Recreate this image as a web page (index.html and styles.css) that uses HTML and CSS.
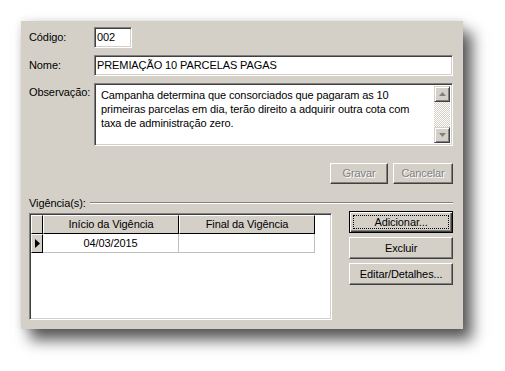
FILE: index.html
```html
<!DOCTYPE html>
<html lang="pt">
<head>
<meta charset="utf-8">
<link rel="stylesheet" href="styles.css">
</head>
<body>
<div class="panel">
  <div class="row">
    <div class="label">Código:</div>
    <div class="field code">002</div>
  </div>
  <div class="row gap7">
    <div class="label">Nome:</div>
    <div class="field name">PREMIAÇÃO 10 PARCELAS PAGAS</div>
  </div>
  <div class="row gap7 top">
    <div class="label obs-label">Observação:</div>
    <div class="field memo">
      <div class="memo-text">Campanha determina que consorciados que pagaram as 10 primeiras parcelas em dia, terão direito a adquirir outra cota com taxa de administração zero.</div>
      <div class="scroll">
        <div class="sbtn"><svg width="7" height="4" viewBox="0 0 7 4"><path d="M3.5 0 L7 4 L0 4 Z" fill="#808080"/></svg></div>
        <div class="track"></div>
        <div class="sbtn"><svg width="7" height="4" viewBox="0 0 7 4"><path d="M0 0 L7 0 L3.5 4 Z" fill="#808080"/></svg></div>
      </div>
    </div>
  </div>
  <div class="actions">
    <div class="btn disabled w58">Gravar</div>
    <div class="btn disabled w60">Cancelar</div>
  </div>
  <div class="group">
    <span class="group-label">Vigência(s):</span>
    <span class="etch"></span>
  </div>
  <div class="lower">
    <div class="grid">
      <div class="grow head">
        <div class="ind hcell"></div>
        <div class="col hcell">Início da Vigência</div>
        <div class="col hcell">Final da Vigência</div>
      </div>
      <div class="grow data">
        <div class="ind icell"><svg width="5" height="9" viewBox="0 0 5 9"><path d="M0 0 L5 4.5 L0 9 Z" fill="#000"/></svg></div>
        <div class="col dcell">04/03/2015</div>
        <div class="col dcell"></div>
      </div>
    </div>
    <div class="side">
      <div class="btn default"><span class="focus">Adicionar...</span></div>
      <div class="btn">Excluir</div>
      <div class="btn">Editar/Detalhes...</div>
    </div>
  </div>
</div>
</body>
</html>
```
FILE: styles.css
```css
* { box-sizing: border-box; }
html, body { margin: 0; padding: 0; background: #fff; }
body {
  width: 505px;
  height: 371px;
  overflow: hidden;
  font-family: "Liberation Sans", Arial, sans-serif;
  font-size: 11px;
  letter-spacing: -0.1px;
  color: #000;
}
.panel {
  margin: 21px 0 0 21px;
  width: 442px;
  height: 308px;
  background: #d4d0c8;
  padding: 6px 10px 0 8px;
  box-shadow: 9px 11px 14px rgba(0,0,0,0.65), 0 0 8px rgba(0,0,0,0.12);
}
.row { display: flex; align-items: center; }
.row.top { align-items: flex-start; }
.gap7 { margin-top: 7px; }
.label { width: 65px; line-height: 13px; }
.obs-label { padding-top: 3px; }
.field {
  background: #fff;
  height: 21px;
  border: 1px solid;
  border-color: #808080 #fff #fff #808080;
  box-shadow: inset 1px 1px #404040, inset -1px -1px #d4d0c8;
  padding: 0 0 0 2px;
  line-height: 19px;
  white-space: nowrap;
}
.code { width: 38px; }
.name { width: 359px; }
.memo {
  width: 359px;
  height: 63px;
  display: flex;
  padding: 2px 2px 2px 6px;
  line-height: 14px;
  white-space: normal;
}
.memo-text { flex: 1; padding-top: 2px; padding-right: 4px; }
.scroll { width: 16px; display: flex; flex-direction: column; }
.sbtn {
  height: 16px;
  background: #d4d0c8;
  border: 1px solid;
  border-color: #d4d0c8 #404040 #404040 #d4d0c8;
  box-shadow: inset 1px 1px #fff, inset -1px -1px #808080;
  display: flex;
  align-items: center;
  justify-content: center;
}
.track {
  flex: 1;
  background: repeating-conic-gradient(#d4d0c8 0 25%, #fff 0 50%) 0 0 / 2px 2px;
}
.actions {
  display: flex;
  justify-content: flex-end;
  gap: 5px;
  margin-top: 17px;
}
.btn {
  height: 22px;
  background: #d4d0c8;
  border: 1px solid;
  border-color: #fff #404040 #404040 #fff;
  box-shadow: inset -1px -1px #808080, inset 1px 1px #d4d0c8;
  display: flex;
  align-items: center;
  justify-content: center;
  line-height: 13px;
}
.w58 { width: 58px; height: 21px; }
.w60 { width: 60px; height: 21px; }
.disabled { color: #808080; text-shadow: 1px 1px 0 #fff; }
.group {
  display: flex;
  align-items: center;
  margin-top: 13px;
  height: 12px;
}
.group-label { line-height: 12px; }
.etch {
  flex: 1;
  margin-left: 4px;
  height: 2px;
  border-top: 1px solid #808080;
  border-bottom: 1px solid #fff;
}
.lower {
  display: flex;
  align-items: flex-start;
  margin-top: 2px;
}
.grid {
  margin-top: 2px;
  width: 304px;
  height: 107px;
  background: #fff;
  border: 1px solid;
  border-color: #808080 #fff #fff #808080;
  box-shadow: inset 1px 1px #404040, inset -1px -1px #d4d0c8;
  padding: 1px 0 0 1px;
}
.grow { display: flex; height: 19px; }
.ind { width: 12px; }
.col { width: 136px; }
.hcell {
  background: #d4d0c8;
  border-top: 1px solid #fff;
  border-left: 1px solid #fff;
  border-right: 1px solid #000;
  border-bottom: 1px solid #000;
  display: flex;
  align-items: center;
  justify-content: center;
  line-height: 13px;
}
.icell {
  background: #d4d0c8;
  border-top: 1px solid #fff;
  border-left: 1px solid #fff;
  border-right: 1px solid #000;
  border-bottom: 1px solid #000;
  display: flex;
  align-items: center;
  justify-content: center;
}
.dcell {
  border-right: 1px solid #c0c0c0;
  border-bottom: 1px solid #c0c0c0;
  display: flex;
  align-items: center;
  justify-content: center;
  line-height: 13px;
}
.side {
  margin-left: 17px;
  width: 104px;
  display: flex;
  flex-direction: column;
  gap: 4px;
}
.default {
  border: 1px solid #000;
  box-shadow: inset 1px 1px #fff, inset -1px -1px #404040, inset -2px -2px #808080;
  padding: 3px;
}
.focus {
  flex: 1;
  align-self: stretch;
  border: 1px dotted #000;
  display: flex;
  align-items: center;
  justify-content: center;
}
```
